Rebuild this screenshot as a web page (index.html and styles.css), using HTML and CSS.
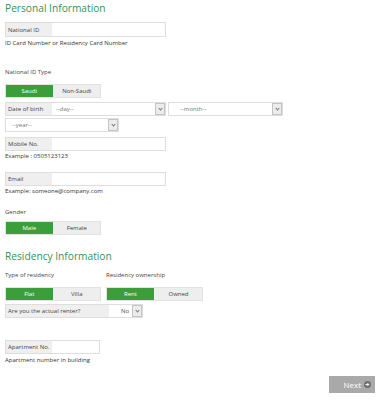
FILE: index.html
```html
<!DOCTYPE html>
<html>
<head>
<meta charset="utf-8">
<link rel="stylesheet" href="styles.css">
</head>
<body>
<div class="page">
  <h1 class="title">Personal Information</h1>

  <div class="field f-nid">
    <span class="flabel">National ID</span><span class="finput"></span>
  </div>
  <div class="hint h-nid">ID Card Number or Residency Card Number</div>

  <div class="label l-idtype">National ID Type</div>
  <div class="toggle t-idtype">
    <span class="opt on">Saudi</span><span class="opt">Non-Saudi</span>
  </div>

  <div class="row r-dob">
    <div class="field f-dob">
      <span class="flabel">Date of birth</span>
      <span class="sel sel-day"><span class="stext">--day--</span><span class="arrow"></span></span>
    </div>
    <span class="sel sel-month"><span class="stext">--month--</span><span class="arrow"></span></span>
  </div>
  <div class="sel sel-year"><span class="stext">--year--</span><span class="arrow"></span></div>

  <div class="field f-mobile">
    <span class="flabel">Mobile No.</span><span class="finput"></span>
  </div>
  <div class="hint h-mobile">Example : 0505123123</div>

  <div class="field f-email">
    <span class="flabel">Email</span><span class="finput"></span>
  </div>
  <div class="hint h-email">Example: someone@company.com</div>

  <div class="label l-gender">Gender</div>
  <div class="toggle t-gender">
    <span class="opt on">Male</span><span class="opt">Female</span>
  </div>

  <h2 class="title t-res">Residency Information</h2>

  <div class="row r-reslabels">
    <div class="label col1">Type of residency</div>
    <div class="label">Residency ownership</div>
  </div>
  <div class="row r-restoggles">
    <div class="toggle col1t">
      <span class="opt on">Flat</span><span class="opt">Villa</span>
    </div>
    <div class="toggle">
      <span class="opt on">Rent</span><span class="opt">Owned</span>
    </div>
  </div>

  <div class="field f-renter">
    <span class="flabel">Are you the actual renter?</span>
    <span class="sel sel-no"><span class="stext">No</span><span class="arrow"></span></span>
  </div>

  <div class="field f-apt">
    <span class="flabel">Apartment No.</span><span class="finput"></span>
  </div>
  <div class="hint h-apt">Apartment number in building</div>

  <div class="actions">
    <span class="next">Next <span class="next-icon"><svg width="7" height="7" viewBox="0 0 7 7"><path d="M1.5 3.5h3.2M3.3 2l1.5 1.5-1.5 1.5" stroke="#fff" stroke-width="1" fill="none"/></svg></span></span>
  </div>
</div>
</body>
</html>
```

FILE: styles.css
```css
html, body {
  margin: 0;
  padding: 0;
  background: #fff;
}
body {
  font-family: "Open Sans", "Noto Sans", sans-serif;
  color: #444;
  font-size: 6px;
}
.page {
  padding: 0 0 0 5px;
}
.title {
  margin: 0;
  font-weight: normal;
  font-size: 10.2px;
  line-height: 16px;
  height: 16px;
  color: #30945a;
}
.field {
  display: flex;
  box-sizing: border-box;
  border: 1px solid #dedede;
  height: 15px;
  background: #fff;
}
.flabel {
  display: flex;
  align-items: center;
  width: 46px;
  padding-left: 2px;
  box-sizing: border-box;
  background: #efefef;
  color: #444;
  white-space: nowrap;
  flex: none;
}
.finput {
  flex: 1;
  background: #fff;
}
.f-nid { width: 161px; margin-top: 6px; }
.hint {
  line-height: 8px;
  height: 8px;
  color: #333;
}
.h-nid { margin-top: 2px; }
.label {
  line-height: 9px;
  height: 9px;
  color: #444;
}
.l-idtype { margin-top: 21px; }
.toggle {
  display: flex;
  box-sizing: border-box;
  border: 1px solid #e2e2e2;
  width: 96px;
  height: 14px;
  background: #eee;
  gap: 1px;
}
.opt {
  flex: 1;
  display: flex;
  align-items: center;
  justify-content: center;
  color: #444;
  background: #eee;
}
.opt.on {
  background: #3b9e3b;
  color: #fff;
}
.t-idtype { margin-top: 7px; }
.row {
  display: flex;
}
.r-dob { margin-top: 4px; align-items: center; gap: 2px; }
.f-dob { width: 161px; height: 14px; }
.sel {
  display: flex;
  align-items: center;
  box-sizing: border-box;
  background: #fff;
  color: #777;
}
.stext { flex: 1; white-space: nowrap; }
.arrow {
  width: 10px;
  height: 12px;
  box-sizing: border-box;
  border: 1px solid #c4c4c4;
  background: #ececec;
  flex: none;
  position: relative;
}
.arrow::after {
  content: "";
  position: absolute;
  left: 3px;
  top: 3px;
  width: 2px;
  height: 2px;
  border-right: 1px solid #777;
  border-bottom: 1px solid #777;
  transform: rotate(45deg);
}
.sel-day { flex: 1; padding-left: 4px; height: 12px; }
.sel-month {
  width: 115px;
  height: 14px;
  border: 1px solid #dedede;
  padding-left: 11px;
}
.sel-year {
  width: 114px;
  height: 14px;
  border: 1px solid #dedede;
  padding-left: 6px;
  margin-top: 2px;
}
.f-mobile { width: 161px; margin-top: 5px; height: 14px; }
.h-mobile { margin-top: 1px; }
.f-email { width: 161px; margin-top: 12px; height: 14px; }
.h-email { margin-top: 1px; }
.l-gender { margin-top: 13px; }
.t-gender { margin-top: 4px; }
.t-res { margin-top: 13px; }
.r-reslabels { margin-top: 7px; }
.col1 { width: 101px; }
.r-restoggles { margin-top: 7px; }
.col1t { margin-right: 5px; }
.r-restoggles .toggle:last-child { width: 97px; }
.f-renter {
  width: 138px;
  height: 14px;
  margin-top: 3px;
}
.f-renter .flabel { width: 103px; }
.sel-no {
  flex: 1;
  height: 12px;
  padding-left: 12px;
  color: #555;
}
.f-apt { width: 95px; margin-top: 22px; height: 14px; }
.h-apt { margin-top: 2px; }
.actions {
  display: flex;
  justify-content: flex-end;
  padding-right: 9px;
  margin-top: 12px;
}
.next {
  display: flex;
  align-items: center;
  justify-content: flex-end;
  width: 46px;
  height: 17px;
  box-sizing: border-box;
  padding-right: 4px;
  gap: 3px;
  background: #a9a9a9;
  color: #fff;
  font-size: 8px;
}
.next-icon {
  width: 7px;
  height: 7px;
  border-radius: 50%;
  background: #6f6f6f;
  display: flex;
}
```
